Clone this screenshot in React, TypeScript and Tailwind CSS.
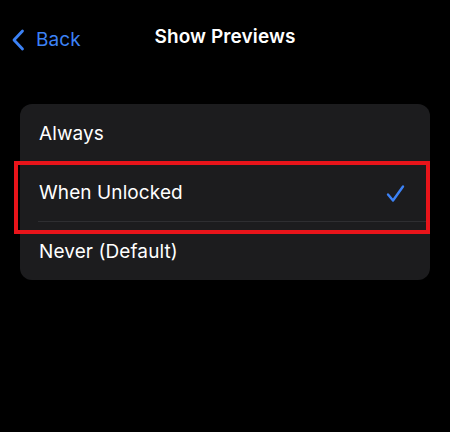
import { useState } from "react";

const options = ["Always", "When Unlocked", "Never (Default)"];

function Chevron() {
  return (
    <svg width="14" height="22" viewBox="0 0 14 22" fill="none">
      <path
        d="M11.5 2 L3 11 L11.5 20"
        stroke="#3c82f6"
        strokeWidth="2.8"
        strokeLinecap="round"
        strokeLinejoin="round"
      />
    </svg>
  );
}

function Check() {
  return (
    <svg width="19" height="19" viewBox="0 0 19 19" fill="none">
      <path
        d="M2 10.5 L7 16.5 L17 2.5"
        stroke="#3c82f6"
        strokeWidth="2.4"
        strokeLinecap="round"
        strokeLinejoin="round"
      />
    </svg>
  );
}

export default function App() {
  const [selected, setSelected] = useState(1);

  return (
    <div
      className="w-[450px] h-[432px] bg-black text-white overflow-hidden"
      style={{ fontFamily: "Inter, 'Noto Sans', sans-serif" }}
    >
      {/* nav bar */}
      <div className="relative h-[75px] flex items-center justify-center">
        <div className="absolute left-[11px] top-[26px] flex items-center gap-[11px]">
          <Chevron />
          <span className="text-[19px] text-[#3c82f6] tracking-[0.1px]">Back</span>
        </div>
        <h1 className="text-[19px] font-semibold tracking-[0.1px]">Show Previews</h1>
      </div>

      {/* options list */}
      <div className="relative mx-[20px] mt-[29px] rounded-[12px] bg-[#1c1c1e]">
        {options.map((label, i) => (
          <div key={label}>
            {i > 0 && <div className="ml-[18px] h-px bg-[#2e2e31]" />}
            <button
              onClick={() => setSelected(i)}
              className="w-full h-[58px] flex items-center justify-between pl-[19px] pr-[25px] pt-[2px] text-left"
            >
              <span className="text-[19px] tracking-[0.1px]">{label}</span>
              {selected === i && <Check />}
            </button>
          </div>
        ))}

        {/* highlight box */}
        <div className="absolute left-[-6px] top-[57px] w-[416px] h-[73px] border-4 border-[#e8141a] pointer-events-none" />
      </div>
    </div>
  );
}
